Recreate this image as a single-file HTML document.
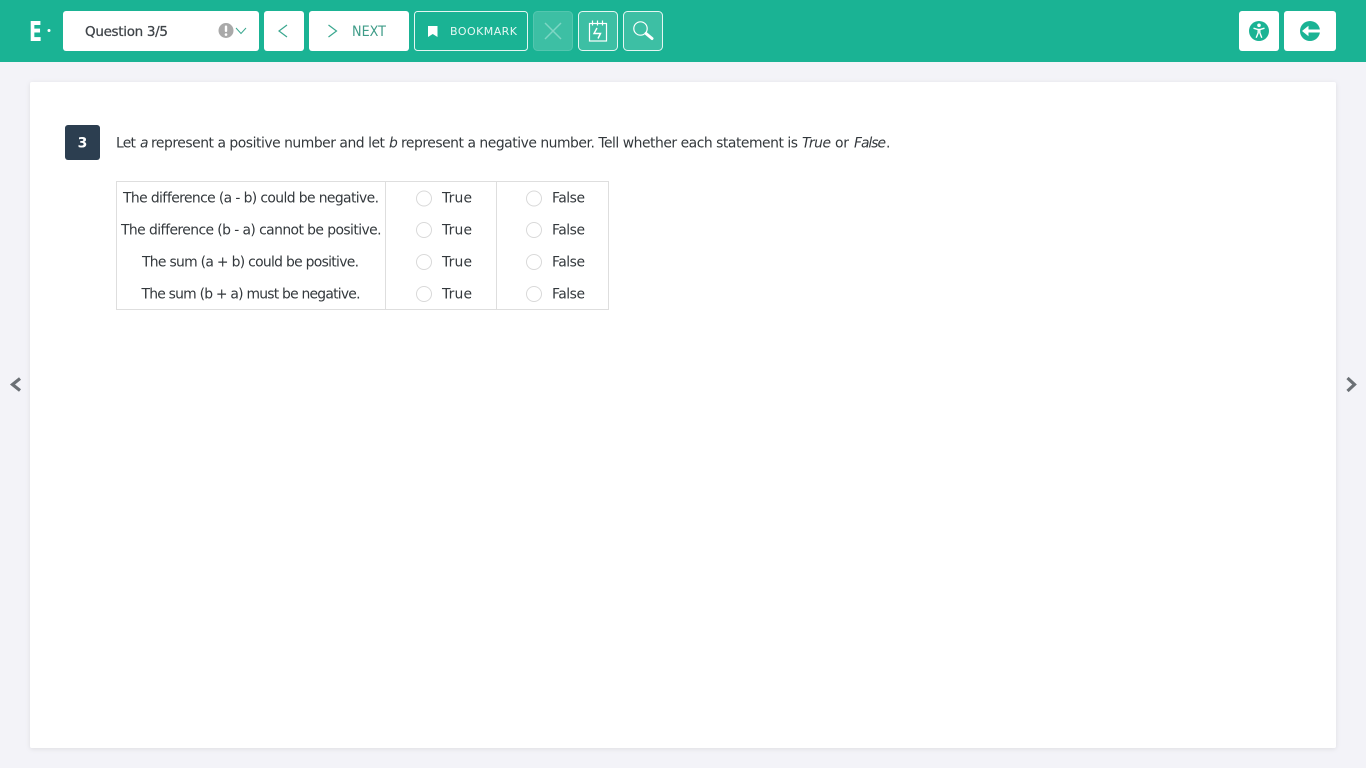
<!DOCTYPE html>
<html lang="en">
<head>
<meta charset="utf-8">
<title>Question 3/5</title>
<style>
html,body{margin:0;padding:0;width:1366px;height:768px;overflow:hidden;background:#f3f3f8}
svg{display:block;position:absolute;left:0;top:0}
text{font-family:"DejaVu Sans","Liberation Sans",sans-serif;fill:#33383c}
.m{font-size:13.9px}
.i{font-style:italic}
.c{filter:url(#s)}
</style>
</head>
<body>
<svg width="1366" height="768" viewBox="0 0 1366 768" xmlns="http://www.w3.org/2000/svg">
<defs>
<filter id="s" x="-5%" y="-5%" width="110%" height="110%">
<feDropShadow dx="0" dy="1" stdDeviation="2.5" flood-color="#000" flood-opacity=".09"/>
</filter>
</defs>

<rect x="0" y="0" width="1366" height="62" fill="#1ab394"/>
<rect x="30" y="82" width="1306" height="666" rx="2" fill="#fff" class="c"/>

<!-- logo -->
<text x="29" y="41" textLength="13" lengthAdjust="spacingAndGlyphs" style="font-size:28px;font-weight:700;fill:#fff">E</text>
<circle cx="49" cy="30.500" r="1.500" fill="#fff"/>

<!-- question select -->
<rect x="63" y="11" width="196" height="40" rx="3" fill="#fff"/>
<text x="85" y="36" textLength="83" style="font-size:13.500px;fill:#3f4449;stroke:#3f4449;stroke-width:.25">Question 3/5</text>
<circle cx="226" cy="30.500" r="7.500" fill="#a9a9a9"/>
<rect x="224.800" y="25.500" width="2.400" height="6.500" rx="1" fill="#fff"/>
<circle cx="226" cy="34.600" r="1.300" fill="#fff"/>
<path d="M236 28l5 5.500 5-5.500" fill="none" stroke="#3aa78f" stroke-width="1"/>

<!-- prev -->
<rect x="264" y="11" width="40" height="40" rx="3" fill="#fff"/>
<path d="M287 25l-8 6 8 6" fill="none" stroke="#3aa78f" stroke-width="1.200"/>

<!-- next -->
<rect x="309" y="11" width="100" height="40" rx="3" fill="#fff"/>
<path d="M328.500 25l8 6-8 6" fill="none" stroke="#3aa78f" stroke-width="1.200"/>
<text x="352" y="36" textLength="34" lengthAdjust="spacingAndGlyphs" style="font-size:14px;fill:#3f9c88">NEXT</text>

<!-- bookmark -->
<rect x="414.500" y="11.500" width="113" height="39" rx="3" fill="none" stroke="#e4f6f2" stroke-width="1"/>
<path d="M428 26h9.500v11l-4.750-3-4.750 3z" fill="#fff"/>
<text x="450" y="35" textLength="67" style="font-size:11px;fill:#e6f8f4">BOOKMARK</text>

<!-- close disabled -->
<rect x="533.500" y="11.500" width="39" height="39" rx="4" fill="#3dbfa4" stroke="#54c6af" stroke-width="1"/>
<path d="M545 23l16 16M561 23l-16 16" stroke="#7ed6c4" stroke-width="1.500" fill="none"/>

<!-- notepad -->
<rect x="578.500" y="11.500" width="39" height="39" rx="4" fill="#3dbfa4" stroke="#e4f6f2" stroke-width="1"/>
<rect x="589.500" y="23.500" width="17" height="17.500" fill="none" stroke="#fff" stroke-width="1.200"/>
<path d="M592.500 20.500v5M597.500 20.500v5M602.500 20.500v5" stroke="#fff" stroke-width="1.200" fill="none"/>
<path d="M597 28l-3 5.500h6.500l-2.500 5" stroke="#fff" stroke-width="1.400" fill="none"/>

<!-- search -->
<rect x="623.500" y="11.500" width="39" height="39" rx="4" fill="#3dbfa4" stroke="#e4f6f2" stroke-width="1"/>
<circle cx="640.500" cy="28.500" r="6.700" fill="none" stroke="#fff" stroke-width="1.200"/>
<path d="M646 33.500l6 5" stroke="#fff" stroke-width="3" fill="none" stroke-linecap="round"/>

<!-- accessibility -->
<rect x="1239" y="11" width="40" height="40" rx="3" fill="#fff"/>
<circle cx="1259" cy="31" r="10" fill="#1ab394"/>
<circle cx="1259" cy="25.300" r="1.800" fill="#fff"/>
<path d="M1253.500 28.200l4.200 1.200h2.600l4.200-1.200M1258.200 29.400v3.300l-2 5M1259.800 29.400v3.300l2 5" fill="none" stroke="#fff" stroke-width="1.400"/>

<!-- exit -->
<rect x="1284" y="11" width="52" height="40" rx="3" fill="#fff"/>
<circle cx="1310" cy="31" r="10" fill="#1ab394"/>
<path d="M1321 29.500h-12.500v-3.800l-6.500 5.300 6.500 5.300v-3.800h12.500z" fill="#fff"/>

<!-- side arrows -->
<path d="M20 378.500l-7.500 6 7.500 6" fill="none" stroke="#6b7075" stroke-width="3.200"/>
<path d="M1347.500 378l7 6.500-7 6.500" fill="none" stroke="#6b7075" stroke-width="3.200"/>

<!-- number badge -->
<rect x="65" y="125" width="35" height="35" rx="3" fill="#2c3e50"/>
<text x="82.500" y="147.500" text-anchor="middle" style="font-size:14px;font-weight:700;fill:#fff">3</text>

<!-- question -->
<text class="m" x="116" y="147.500" textLength="20">Let</text>
<text class="m i" x="140" y="147.500" textLength="8">a</text>
<text class="m" x="151" y="147.500" textLength="234">represent a positive number and let</text>
<text class="m i" x="389" y="147.500" textLength="9">b</text>
<text class="m" x="401" y="147.500" textLength="397">represent a negative number. Tell whether each statement is</text>
<text class="m i" x="802" y="147.500" textLength="29">True</text>
<text class="m" x="835" y="147.500" textLength="14">or</text>
<text class="m i" x="854" y="147.500" textLength="32">False</text>
<text class="m" x="886" y="147.500" textLength="3">.</text>

<!-- table -->
<rect x="116.500" y="181.500" width="492" height="128" fill="none" stroke="#dedede" stroke-width="1"/>
<path d="M385.500 181.500v128M496.500 181.500v128" stroke="#dedede" stroke-width="1" fill="none"/>

<text class="m" x="123" y="202.500" textLength="256">The difference (a - b) could be negative.</text>
<text class="m" x="121" y="234.500" textLength="260.500">The difference (b - a) cannot be positive.</text>
<text class="m" x="142" y="266.500" textLength="217">The sum (a + b) could be positive.</text>
<text class="m" x="141.500" y="298.500" textLength="219">The sum (b + a) must be negative.</text>

<g fill="#fff" stroke="#d9d9d9" stroke-width="1">
<circle cx="424" cy="198.500" r="7.500"/><circle cx="534" cy="198.500" r="7.500"/>
<circle cx="424" cy="230" r="7.500"/><circle cx="534" cy="230" r="7.500"/>
<circle cx="424" cy="262" r="7.500"/><circle cx="534" cy="262" r="7.500"/>
<circle cx="424" cy="294" r="7.500"/><circle cx="534" cy="294" r="7.500"/>
</g>

<text class="m" x="442" y="202.500" textLength="30">True</text>
<text class="m" x="552" y="202.500" textLength="33">False</text>
<text class="m" x="442" y="234.500" textLength="30">True</text>
<text class="m" x="552" y="234.500" textLength="33">False</text>
<text class="m" x="442" y="266.500" textLength="30">True</text>
<text class="m" x="552" y="266.500" textLength="33">False</text>
<text class="m" x="442" y="298.500" textLength="30">True</text>
<text class="m" x="552" y="298.500" textLength="33">False</text>
</svg>
</body>
</html>
